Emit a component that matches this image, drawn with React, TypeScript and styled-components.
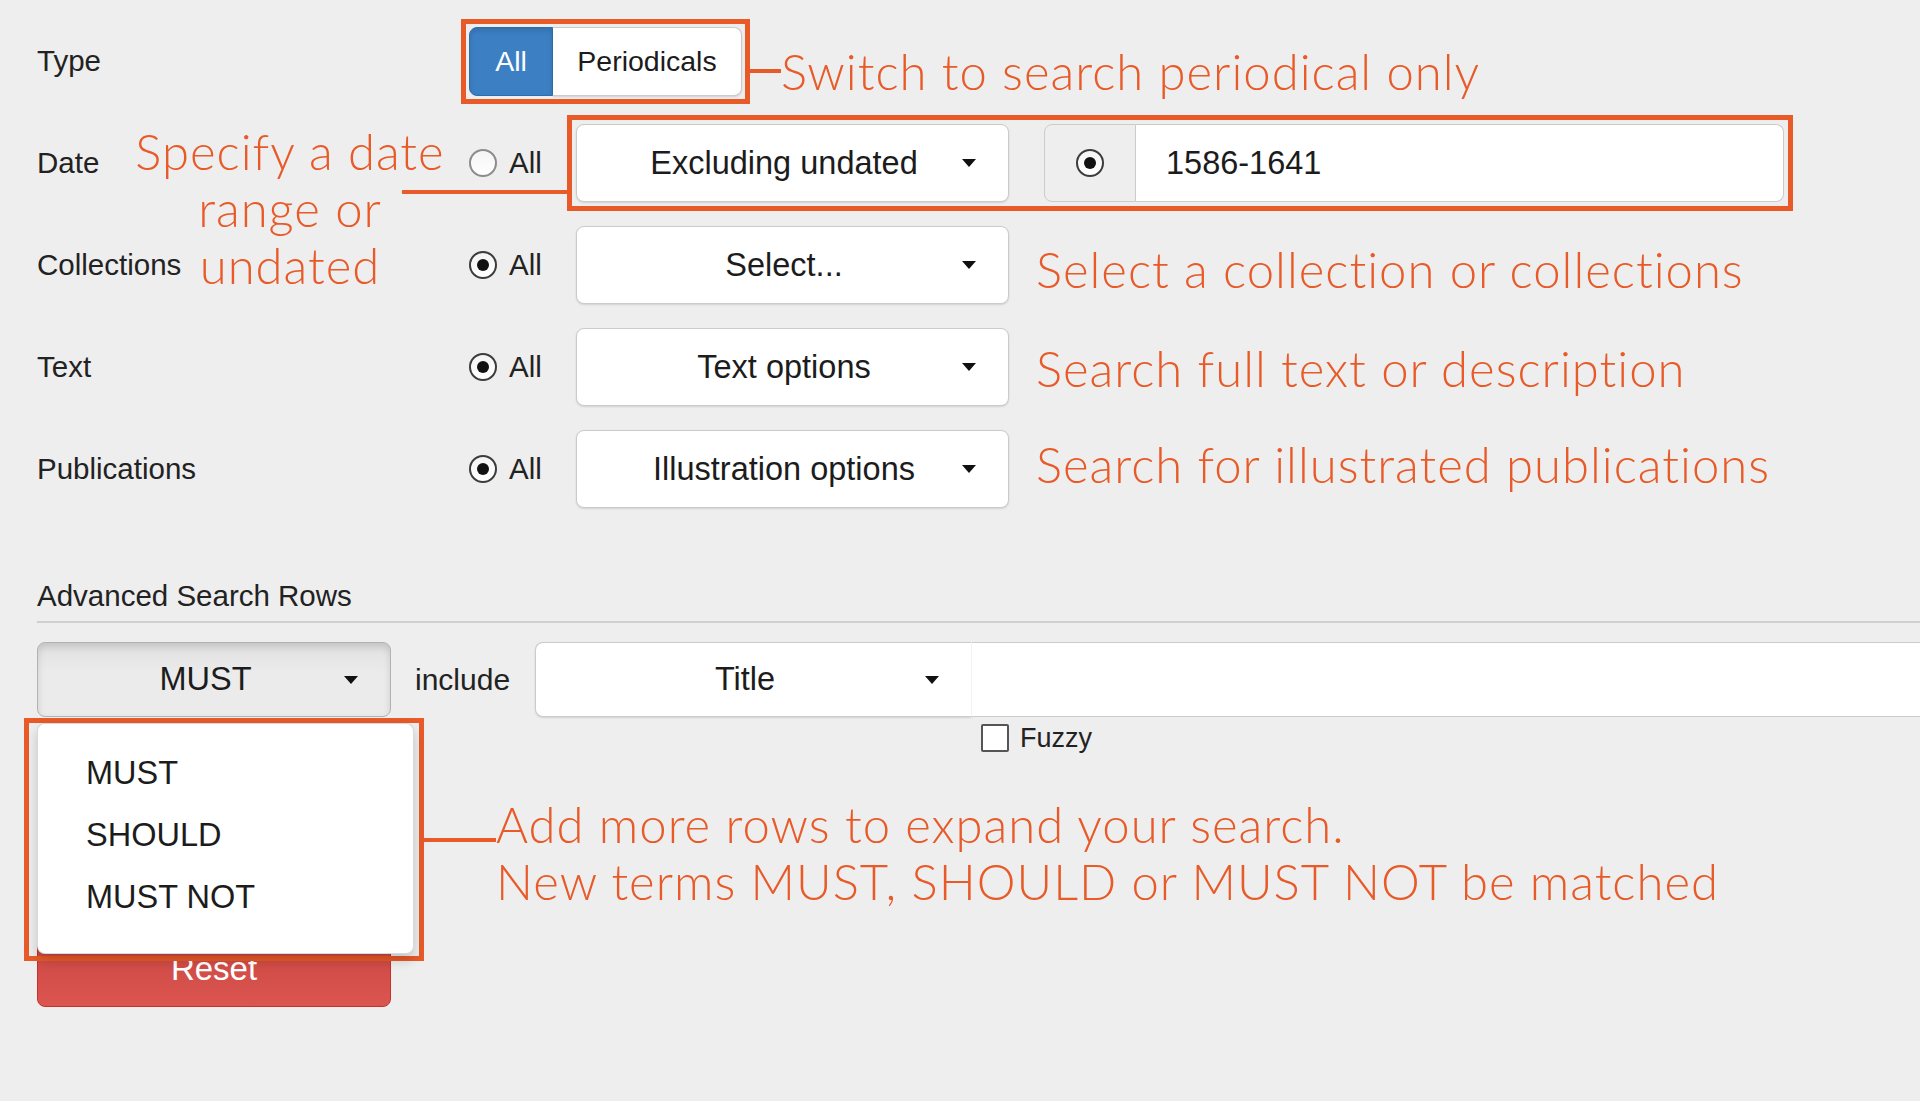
import React from "react";
import styled, { createGlobalStyle } from "styled-components";

const ORANGE = "#e85a28";

const GlobalStyle = createGlobalStyle`
  html, body {
    margin: 0;
    padding: 0;
    background: #eeeeee;
    overflow: hidden;
  }
  body {
    font-family: "Liberation Sans", Arial, sans-serif;
    color: #222222;
  }
`;

const Page = styled.div`
  box-sizing: border-box;
  width: 1920px;
  height: 1101px;
  overflow: hidden;
  padding: 22px 0 0 37px;
`;

/* ---------- filter rows ---------- */

const FilterList = styled.div`
  position: relative;
  display: flex;
  flex-direction: column;
  gap: 24px;
`;

const FilterRow = styled.div`
  display: flex;
  align-items: center;
  height: 78px;
`;

const RowLabel = styled.div`
  width: 432px;
  flex-shrink: 0;
  font-size: 29.5px;
`;

const RadioOption = styled.label`
  display: flex;
  align-items: center;
  gap: 12px;
  width: 107px;
  flex-shrink: 0;
  font-size: 29.5px;
`;

const Radio = styled.span<{ $checked?: boolean }>`
  box-sizing: border-box;
  display: inline-flex;
  align-items: center;
  justify-content: center;
  width: 28px;
  height: 28px;
  border-radius: 50%;
  border: 2px solid ${(p) => (p.$checked ? "#3c3c3c" : "#8c8c8c")};
  background: linear-gradient(#f4f4f4, #ffffff);
  &::after {
    content: "";
    display: ${(p) => (p.$checked ? "block" : "none")};
    width: 12px;
    height: 12px;
    border-radius: 50%;
    background: #111111;
  }
`;

const Dropdown = styled.button<{ $width: number; $height?: number; $pressed?: boolean; $joined?: boolean }>`
  display: flex;
  align-items: center;
  box-sizing: border-box;
  flex-shrink: 0;
  width: ${(p) => p.$width}px;
  height: ${(p) => p.$height ?? 78}px;
  padding: 0 32px 0 29px;
  border: 1px solid ${(p) => (p.$pressed ? "#b2b2b2" : "#cbcbcb")};
  border-right-color: ${(p) => (p.$joined ? "#f1f1f1" : p.$pressed ? "#b2b2b2" : "#cbcbcb")};
  border-radius: ${(p) => (p.$joined ? "8px 0 0 8px" : "8px")};
  background: ${(p) => (p.$pressed ? "linear-gradient(#e0e0e0, #ebebeb 40%)" : "#ffffff")};
  box-shadow: ${(p) =>
    p.$pressed ? "inset 0 4px 7px rgba(0,0,0,0.13)" : "0 1px 2px rgba(0,0,0,0.12)"};
  font-family: inherit;
  font-size: 32.5px;
  color: #1c1c1c;
`;

const DropText = styled.span`
  flex: 1;
  text-align: center;
  white-space: nowrap;
`;

const Caret = styled.span`
  width: 0;
  height: 0;
  border-left: 7px solid transparent;
  border-right: 7px solid transparent;
  border-top: 8px solid #111111;
`;

const ButtonGroup = styled.div`
  display: flex;
  height: 69px;
  outline: 5px solid ${ORANGE};
  outline-offset: 3px;
`;

const ToggleButton = styled.button<{ $active?: boolean; $width: number }>`
  box-sizing: border-box;
  width: ${(p) => p.$width}px;
  height: 100%;
  border: 1px solid ${(p) => (p.$active ? "#2f6ead" : "#cbcbcb")};
  background: ${(p) => (p.$active ? "#3c7fc3" : "#ffffff")};
  color: ${(p) => (p.$active ? "#ffffff" : "#1c1c1c")};
  font-family: inherit;
  font-size: 28.5px;
  box-shadow: ${(p) => (p.$active ? "inset 0 3px 5px rgba(0,0,0,0.12)" : "0 1px 2px rgba(0,0,0,0.12)")};
  &:first-child {
    border-radius: 8px 0 0 8px;
  }
  &:last-child {
    border-radius: 0 8px 8px 0;
    border-left: none;
  }
`;

const DateHighlight = styled.div`
  display: flex;
  align-items: center;
  gap: 35px;
  outline: 5px solid ${ORANGE};
  outline-offset: 4px;
`;

const InputGroup = styled.div`
  display: flex;
  width: 740px;
  height: 78px;
`;

const Addon = styled.span`
  box-sizing: border-box;
  display: flex;
  align-items: center;
  justify-content: center;
  width: 92px;
  background: #eeeeee;
  border: 1px solid #cbcbcb;
  border-radius: 8px 0 0 8px;
`;

const DateInput = styled.input`
  box-sizing: border-box;
  flex: 1;
  min-width: 0;
  padding: 0 0 0 30px;
  border: 1px solid #cbcbcb;
  border-left: none;
  border-radius: 0 8px 8px 0;
  background: #ffffff;
  font-family: inherit;
  font-size: 32.5px;
  color: #1c1c1c;
  outline: none;
`;

/* ---------- annotations ---------- */

const NoteText = styled.div<{ $top?: number }>`
  margin-top: ${(p) => p.$top ?? 0}px;
  font-family: Lato, "Open Sans", sans-serif;
  font-weight: 300;
  font-size: 49px;
  letter-spacing: 1px;
  line-height: 57px;
  color: ${ORANGE};
  white-space: nowrap;
`;

const Connector = styled.span<{ $width: number; $top?: number }>`
  display: block;
  flex-shrink: 0;
  width: ${(p) => p.$width}px;
  height: 4px;
  margin-top: ${(p) => p.$top ?? 0}px;
  background: ${ORANGE};
`;

const SideNote = styled.div<{ $gap: number; $shift: number }>`
  display: flex;
  align-items: center;
  margin-left: ${(p) => p.$gap}px;
  margin-top: ${(p) => p.$shift}px;
`;

const DateNote = styled.div`
  position: absolute;
  left: 83px;
  top: 101px;
  width: 340px;
  text-align: center;
`;

const DateConnector = styled(Connector)`
  position: absolute;
  left: 282px;
  top: 67px;
`;

/* ---------- advanced rows ---------- */

const AdvancedHeading = styled.div`
  margin-top: 71px;
  padding-bottom: 8px;
  border-bottom: 2px solid #cfcfcf;
  font-size: 29.5px;
  line-height: 34px;
`;

const AdvancedRow = styled.div`
  display: flex;
  align-items: flex-start;
  margin-top: 19px;
`;

const MustWrap = styled.div`
  position: relative;
  z-index: 2;
`;

const IncludeLabel = styled.span`
  margin: 0 25px 0 24px;
  font-size: 30px;
  line-height: 75px;
`;

const SearchGroup = styled.div`
  display: flex;
  flex: 1;
`;

const FieldColumn = styled.div`
  display: flex;
  flex-direction: column;
  flex: 1;
`;

const TextField = styled.div`
  box-sizing: border-box;
  height: 75px;
  background: #ffffff;
  border-top: 1px solid #cbcbcb;
  border-bottom: 1px solid #cbcbcb;
`;

const FuzzyLabel = styled.label`
  display: flex;
  align-items: center;
  gap: 11px;
  margin-top: 6px;
  padding-left: 9px;
  font-size: 27px;
  line-height: 30px;
`;

const CheckBox = styled.span`
  box-sizing: border-box;
  width: 28px;
  height: 28px;
  border: 2px solid #555555;
  border-radius: 2px;
  background: #ffffff;
`;

const ResetButton = styled.button`
  display: block;
  box-sizing: border-box;
  width: 354px;
  height: 77px;
  margin-top: 177px;
  border: 1px solid #c9302c;
  border-radius: 8px;
  background: linear-gradient(#c8443f, #dc5651);
  color: #ffffff;
  font-family: inherit;
  font-size: 33px;
`;

const MenuCallout = styled.div`
  position: absolute;
  left: -13px;
  top: 76px;
  display: flex;
  align-items: flex-start;
`;

const MenuHighlight = styled.div`
  flex-shrink: 0;
  padding: 0 5px 2px 8px;
  border: 5px solid ${ORANGE};
`;

const Menu = styled.ul`
  box-sizing: border-box;
  width: 377px;
  height: 231px;
  margin: 0;
  padding: 18px 0 28px;
  list-style: none;
  background: #ffffff;
  border: 1px solid rgba(0, 0, 0, 0.15);
  border-radius: 8px;
  box-shadow: 0 6px 12px rgba(0, 0, 0, 0.18);
`;

const MenuItem = styled.li`
  padding-left: 48px;
  font-size: 32.5px;
  line-height: 62px;
  color: #1c1c1c;
`;

const MenuNote = styled.div`
  display: flex;
  align-items: flex-start;
`;

const filters = [
  { label: "Collections", value: "Select...", note: "Select a collection or collections", shift: 8 },
  { label: "Text", value: "Text options", note: "Search full text or description", shift: 3 },
  { label: "Publications", value: "Illustration options", note: "Search for illustrated publications", shift: -9 },
];

export default function App() {
  return (
    <Page>
      <GlobalStyle />
      <FilterList>
        <FilterRow>
          <RowLabel>Type</RowLabel>
          <ButtonGroup>
            <ToggleButton $active $width={84}>All</ToggleButton>
            <ToggleButton $width={189}>Periodicals</ToggleButton>
          </ButtonGroup>
          <SideNote $gap={8} $shift={20}>
            <Connector $width={31} />
            <NoteText>Switch to search periodical only</NoteText>
          </SideNote>
        </FilterRow>

        <FilterRow>
          <RowLabel>Date</RowLabel>
          <RadioOption>
            <Radio />
            All
          </RadioOption>
          <DateHighlight>
            <Dropdown $width={433}>
              <DropText>Excluding undated</DropText>
              <Caret />
            </Dropdown>
            <InputGroup>
              <Addon>
                <Radio $checked />
              </Addon>
              <DateInput readOnly value="1586-1641" />
            </InputGroup>
          </DateHighlight>
        </FilterRow>

        {filters.map((f) => (
          <FilterRow key={f.label}>
            <RowLabel>{f.label}</RowLabel>
            <RadioOption>
              <Radio $checked />
              All
            </RadioOption>
            <Dropdown $width={433}>
              <DropText>{f.value}</DropText>
              <Caret />
            </Dropdown>
            <SideNote $gap={27} $shift={f.shift}>
              <NoteText>{f.note}</NoteText>
            </SideNote>
          </FilterRow>
        ))}

        <DateNote>
          <NoteText>
            Specify a date
            <br />
            range or
            <br />
            undated
          </NoteText>
          <DateConnector $width={165} />
        </DateNote>
      </FilterList>

      <AdvancedHeading>Advanced Search Rows</AdvancedHeading>
      <AdvancedRow>
        <MustWrap>
          <Dropdown $width={354} $height={75} $pressed>
            <DropText>MUST</DropText>
            <Caret />
          </Dropdown>
          <MenuCallout>
            <MenuHighlight>
              <Menu>
                <MenuItem>MUST</MenuItem>
                <MenuItem>SHOULD</MenuItem>
                <MenuItem>MUST NOT</MenuItem>
              </Menu>
            </MenuHighlight>
            <MenuNote>
              <Connector $width={72} $top={120} />
              <NoteText $top={78}>
                Add more rows to expand your search.
                <br />
                New terms MUST, SHOULD or MUST NOT be matched
              </NoteText>
            </MenuNote>
          </MenuCallout>
        </MustWrap>
        <IncludeLabel>include</IncludeLabel>
        <SearchGroup>
          <Dropdown $width={437} $height={75} $joined>
            <DropText>Title</DropText>
            <Caret />
          </Dropdown>
          <FieldColumn>
            <TextField />
            <FuzzyLabel>
              <CheckBox />
              Fuzzy
            </FuzzyLabel>
          </FieldColumn>
        </SearchGroup>
      </AdvancedRow>
      <ResetButton>Reset</ResetButton>
    </Page>
  );
}
